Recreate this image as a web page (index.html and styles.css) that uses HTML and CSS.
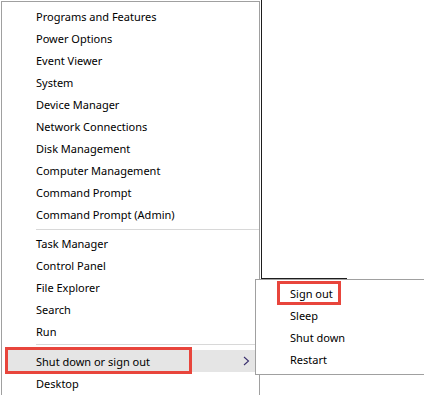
FILE: index.html
```html
<!DOCTYPE html>
<html lang="en">
<head>
  <meta charset="UTF-8" />
  <title>Quick Link menu</title>
  <link rel="stylesheet" href="styles.css">
</head>
<body>

  <div class="backdrop"></div>

  <div class="menu">
    <ul class="group">
      <li>Programs and Features</li>
      <li>Power Options</li>
      <li>Event Viewer</li>
      <li>System</li>
      <li>Device Manager</li>
      <li>Network Connections</li>
      <li>Disk Management</li>
      <li>Computer Management</li>
      <li>Command Prompt</li>
      <li>Command Prompt (Admin)</li>
    </ul>
    <div class="sep first"></div>
    <ul class="group">
      <li>Task Manager</li>
      <li>Control Panel</li>
      <li>File Explorer</li>
      <li>Search</li>
      <li>Run</li>
    </ul>
    <div class="sep second"></div>
    <ul class="group">
      <li class="active">
        Shut down or sign out
        <span class="mark wide"></span>
        <svg class="chevron" width="7" height="10" viewBox="0 0 7 10">
          <path d="M1 1 L5.5 5 L1 9" fill="none" stroke="#3a2f6e" stroke-width="1.1"/>
        </svg>
      </li>
      <li>Desktop</li>
    </ul>
  </div>

  <div class="submenu">
    <ul class="group">
      <li>Sign out <span class="mark small"></span></li>
      <li>Sleep</li>
      <li>Shut down</li>
      <li>Restart</li>
    </ul>
  </div>

</body>
</html>
```

FILE: styles.css
```css
body {
  font-family: "Noto Sans", sans-serif;
  font-size: 11px;
  color: #000;
  background: #fff;
  margin: 0;
  width: 424px;
  height: 395px;
  overflow: hidden;
  position: relative;
}

ul {
  list-style: none;
  margin: 0;
  padding: 0;
}

li {
  height: 22px;
  line-height: 23px;
  padding-left: 34px;
  position: relative;
  white-space: nowrap;
}

/* window edge behind the menu */
.backdrop {
  position: absolute;
  left: 261px;
  top: 0;
  width: 85px;
  height: 278px;
  border-left: 1px solid #1e1e1e;
  border-bottom: 1px solid #1e1e1e;
}

.menu {
  position: relative;
  margin: 1px 0 0 1px;
  width: 259px;
  height: 400px;
  box-sizing: border-box;
  border-left: 1px solid #a0a0a0;
  border-top: 1px solid #a0a0a0;
  border-right: 1px solid #a0a0a0;
  background: #fff;
  padding-top: 3px;
}

.sep {
  height: 1px;
  background: #d8d8d8;
  margin-left: 34px;
}

.sep.first {
  margin-top: 4px;
  margin-bottom: 2px;
}

.sep.second {
  margin-top: 2px;
  margin-bottom: 5px;
}

.active {
  background: #e5e5e5;
  margin-left: 3px;
  padding-left: 31px;
}

.chevron {
  position: absolute;
  left: 238px;
  top: 6px;
}

.mark {
  position: absolute;
  border: 3px solid #e8453c;
}

.mark.wide {
  left: 0;
  top: -3px;
  width: 181px;
  height: 21px;
}

.mark.small {
  left: 21px;
  top: -1px;
  width: 58px;
  height: 18px;
}

.submenu {
  position: absolute;
  left: 255px;
  top: 279px;
  width: 180px;
  box-sizing: border-box;
  border: 1px solid #a0a0a0;
  background: #fff;
  padding: 2px 0 4px;
}

.submenu li {
  padding-left: 34px;
}
```
